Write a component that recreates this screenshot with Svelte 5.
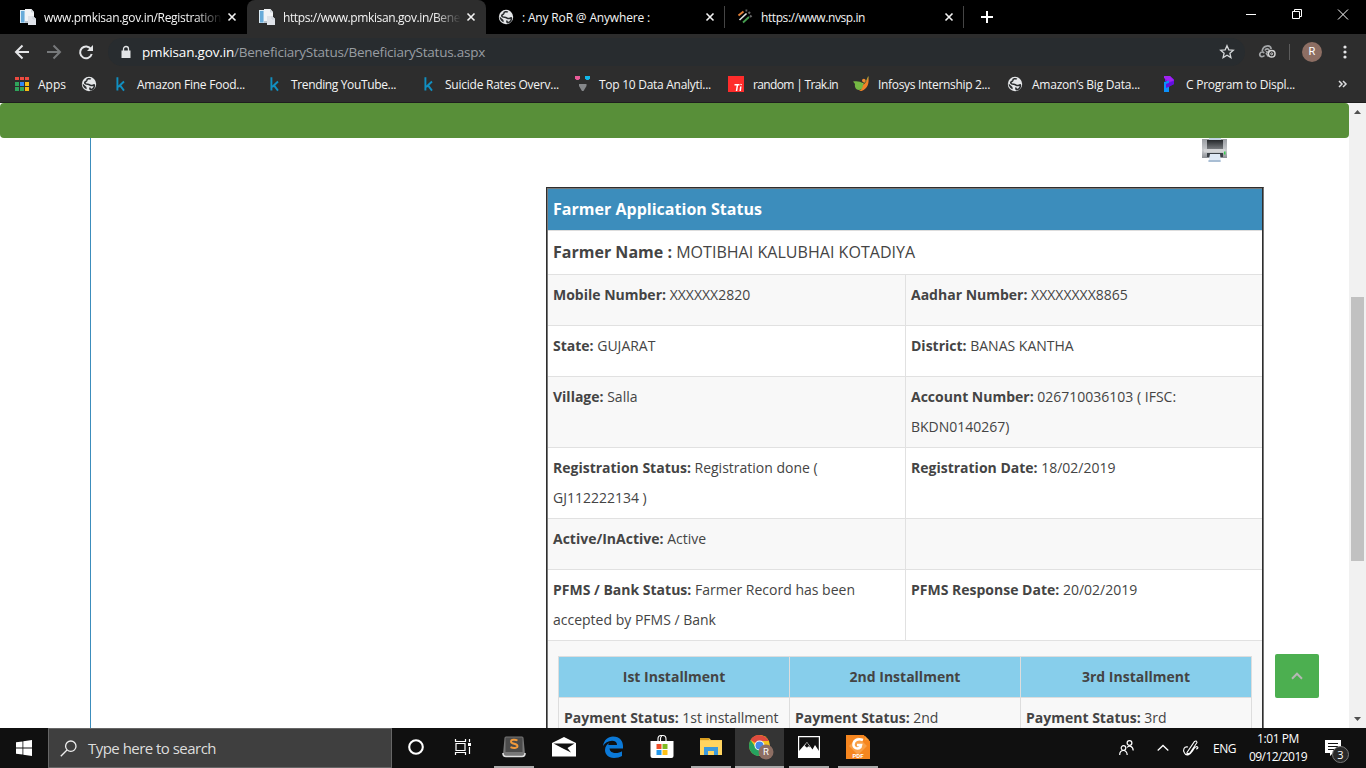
<script>
  // Spreads a label's letters so that it takes up the given width.
  function fit(node, width) {
    const natural = node.getBoundingClientRect().width;
    const count = node.textContent.length;
    node.style.letterSpacing = `${(width - natural) / count}px`;
  }

  const bookmarks = [
    { icon: 'kaggle', x: 112, text: 'Amazon Fine Food...', w: 108 },
    { icon: 'kaggle', x: 266, text: 'Trending YouTube...', w: 105 },
    { icon: 'kaggle', x: 420, text: 'Suicide Rates Overv...', w: 114 },
    { icon: 'vidhya', x: 574, text: 'Top 10 Data Analyti...', w: 112 },
    { icon: 'trak', x: 728, text: 'random | Trak.in', w: 85 },
    { icon: 'bird', x: 853, text: 'Infosys Internship 2...', w: 112 },
    { icon: 'globe', x: 1007, text: 'Amazon’s Big Data...', w: 108 },
    { icon: 'program', x: 1161, text: 'C Program to Displ...', w: 109 }
  ];

  const tabs = [
    { icon: 'page', text: 'www.pmkisan.gov.in/Registration', w: 177, active: false },
    { icon: 'page', text: 'https://www.pmkisan.gov.in/Bene', w: 177, active: true },
    { icon: 'globe', text: ': Any RoR @ Anywhere :', w: 128, active: false },
    { icon: 'nvsp', text: 'https://www.nvsp.in', w: 104, active: false }
  ];

  const rows = [
    { h: 51, a: ['Mobile Number:', 'XXXXXX2820'], b: ['Aadhar Number:', 'XXXXXXXX8865'] },
    { h: 51, a: ['State:', 'GUJARAT'], b: ['District:', 'BANAS KANTHA'] },
    { h: 71, a: ['Village:', 'Salla'], b: ['Account Number:', '026710036103 ( IFSC:', 'BKDN0140267)'] },
    { h: 71, a: ['Registration Status:', 'Registration done (', 'GJ112222134 )'], b: ['Registration Date:', '18/02/2019'] },
    { h: 51, a: ['Active/InActive:', 'Active'], b: ['', ''] },
    { h: 71, a: ['PFMS / Bank Status:', 'Farmer Record has been', 'accepted by PFMS / Bank'], b: ['PFMS Response Date:', '20/02/2019'] }
  ];

  const installments = [
    ['Ist Installment', '1st installment'],
    ['2nd Installment', '2nd'],
    ['3rd Installment', '3rd']
  ];
</script>

{#snippet icon(name)}
  <svg class="ico" width="16" height="16" viewBox="0 0 16 16">
    {#if name === 'page'}
      <path d="M0 1h6v13H0z" fill="#dcebf5" />
      <path d="M1 2h3.500v11.500H1z" fill="#68abd9" />
      <path d="M5 0h6.500L14 3v5l2 2v6H8v-2H5z" fill="#f1f3f6" />
      <path d="M8 7h5l3 3v6H8z" fill="#dfe3e9" />
      <path d="M5 12h3v2H5z" fill="#b9c4cf" />
      <path d="M11.500.5V3H14M13 7v3h3" stroke="#c2c9d2" stroke-width=".8" fill="none" />
    {:else if name === 'globe'}
      <circle cx="8" cy="8" r="7.200" fill="#e4e6e8" />
      <path d="M9.800 3.200C8.500 2.200 6 2.800 5.800 4.400c-.2 1.300-1.800 1-2 2.100-.2 1.300 1.500 1.800 3 1.700 1.700 0 1.800 1.200 3 1.300 1.600.1 3.200-.2 3.200-1.200 1.200 2.500-.8 4.700-2.500 5.200-1.500.4-2-.9-1.100-1.900" fill="none" stroke="#292c2e" stroke-width="1.600" />
      <path d="M1.600 7.500 5.500 11l.2 2.300C3.400 12.500 1.600 10.500 1.600 7.500z" fill="#292c2e" />
    {:else if name === 'nvsp'}
      <path d="m1.500 6.500 5-4" stroke="#df7d36" stroke-width="2" />
      <path d="m2.500 11 7-6.500" stroke="#dfe2df" stroke-width="1.700" />
      <path d="m6 13.500 6-5.500" stroke="#469f50" stroke-width="1.800" />
      <path d="M8.500 1.500h1.800M11.500 4.500 13 3M13 8l1.500-1.500" stroke="#666" stroke-width="2.200" />
    {:else if name === 'kaggle'}
      <path d="M5.400 1.200v13.300M12 5.500 6.200 11M8 9.400l4 5.200" fill="none" stroke="#118fc1" stroke-width="1.900" />
    {:else if name === 'vidhya'}
      <path d="M1 0h5v2.500L4.500 4h-2L1 2.500z" fill="#e95b98" />
      <path d="M11 0h5v2.500L14.500 4h-2L11 2.500z" fill="#12b7e9" />
      <path d="M5 8h7.500v2L9.500 15h-1.500L5 10z" fill="#85878a" />
    {:else if name === 'trak'}
      <path d="M0 0h16v16H0z" fill="#fe2c2b" />
      <path d="M6.500 8.700h5M9.500 8.500l-1 6.500M12.800 10.500l-.6 4.500M13.200 8l-.2 1" stroke="#fff" stroke-width="1.500" />
    {:else if name === 'bird'}
      <path d="M0 5.500c4-.8 7-.2 10.500 2 .8 3-1 6.500-4.500 6.500-4 0-4.500-4.500-4-6z" fill="#74b843" />
      <path d="M15.300.5c1 6.500-.2 12-6.800 14.500H5.800c3-1.200 4-3.500 4.200-6C12.500 7.500 14 4.500 15.300.5z" fill="#f08228" />
      <circle cx="10.800" cy="4.500" r="1.800" fill="#ef8c32" />
      <path d="M9 7.500c3-.3 5-3 6.300-7" fill="none" stroke="#bfcf3e" stroke-width=".6" />
    {:else if name === 'program'}
      <path d="M4 0h5l4 3.500V8L8 10.500V6.500L4 5z" fill="#7a13f0" />
      <path d="M3 0h6l4 4.500L8 6 3 2z" fill="#a022f2" />
      <path d="M3 6 8 4.500V16H3z" fill="#0b91fb" />
      <path d="m5 8 8-3v3l-5 2.800L5 12z" fill="#6210df" />
    {/if}
  </svg>
{/snippet}

<div class="screen">
  <header class="tabs">
    {#each tabs as tab}
      <div class="tab" class:active={tab.active}>
        {@render icon(tab.icon)}
        <span class="title" class:fade={tab.icon === 'page'}><span class="fit" use:fit={tab.w}>{tab.text}</span></span>
        <svg class="close" width="8" height="8" viewBox="0 0 8 8"><path d="m.5.5 7 7m0-7-7 7" stroke="#f2f2f2" stroke-width="1.600" /></svg>
      </div>
    {/each}
    <svg class="plus" width="12" height="12" viewBox="0 0 12 12"><path d="M6 0v12M0 6h12" stroke="#fff" stroke-width="2" /></svg>
    <svg class="win" width="104" height="12" viewBox="0 0 104 12" fill="none" stroke="#fff">
      <path d="M0 6.500h10M46.500 3.500h7v7h-7zM48.500 3V1.500h7v7H54M92 1.500l10 10m0-10-10 10" />
    </svg>
  </header>

  <div class="toolbar">
    <svg class="nav" width="80" height="16" viewBox="0 0 80 16" fill="none" stroke-width="2">
      <path d="M14 8H1.500M7.500 1.500 1 8l6.500 6.500" stroke="#e4e5e7" />
      <path d="M32 8h12.500M38.500 1.500 45 8l-6.500 6.500" stroke="#77797b" />
      <path d="M76 5.200A5.900 5.900 0 1 0 76.700 10" stroke="#e4e5e7" />
      <path d="M78 1v6h-6z" fill="#e4e5e7" stroke="none" />
    </svg>
    <div class="address">
      <svg width="10" height="13" viewBox="0 0 10 13"><path d="M.5 4.500h9V12h-9z" fill="#e3e5e7" /><path d="M2.500 5V3a2.300 2.300 0 0 1 5 0v2" fill="none" stroke="#e3e5e7" stroke-width="1.300" /></svg>
      <span class="url"><span class="fit" use:fit={92}>pmkisan.gov.in</span><span class="fit path" use:fit={251}>/BeneficiaryStatus/BeneficiaryStatus.aspx</span></span>
      <svg class="star" width="16" height="16" viewBox="0 0 16 16"><path d="m8 1.700 1.800 4.100 4.500.4-3.400 3 1 4.400L8 11.200l-3.900 2.400 1-4.400-3.400-3 4.500-.4z" fill="none" stroke="#d4d7d9" stroke-width="1.300" /></svg>
    </div>
    <svg class="ext" width="17" height="14" viewBox="0 0 17 14" fill="none" stroke="#a4a6a8" stroke-width="1.700">
      <path d="M5.500 10.500C3 13 0 11 1 8.500c.8-2 3.500-2 4-.2M3.200 6C4 0 11.500-.5 12.200 4M6 5.500c1-2.500 4-2 4.200.2 0 1.800-2.700 2-2.700.3M7 8l2.500 3.500" />
      <circle cx="12.700" cy="8.800" r="3.300" stroke="#d4d4d4" stroke-width="1.500" /><circle cx="12.700" cy="8.800" r="1" stroke="#d4d4d4" stroke-width="1" />
    </svg>
    <i class="divider"></i>
    <span class="avatar">R</span>
    <svg class="dots" width="4" height="14" viewBox="0 0 4 14" fill="#e4e5e7"><circle cx="2" cy="2" r="1.600" /><circle cx="2" cy="7" r="1.600" /><circle cx="2" cy="12" r="1.600" /></svg>
  </div>

  <nav class="bookmarks">
    <svg class="apps" width="14" height="14" viewBox="0 0 14 14">
      <path d="M0 0h4v3H0zM5 0h4v3H5zM10 0h4v3h-4z" fill="#ed4a40" />
      <path d="M0 5h4v4H0zM0 10h4v4H0zM5 10h4v4H5z" fill="#2fa55b" />
      <path d="M5 5h4v4H5z" fill="#3287f4" /><path d="M10 5h4v4h-4zM10 10h4v4h-4z" fill="#f7bc16" />
    </svg>
    <span class="fit" use:fit={28}>Apps</span>
    <span class="lone">{@render icon('globe')}</span>
    <div class="marks">
      {#each bookmarks as mark, i}
        <div class="mark" style:width="{(bookmarks[i + 1]?.x ?? 1315) - mark.x}px">
          {@render icon(mark.icon)}
          <span class="fit" use:fit={mark.w}>{mark.text}</span>
        </div>
      {/each}
    </div>
    <svg class="more" width="9" height="8" viewBox="0 0 9 8"><path d="m1 1 3 3-3 3m4-6 3 3-3 3" fill="none" stroke="#dcdddf" stroke-width="1.500" /></svg>
  </nav>

  <main>
    <div class="page">
      <div class="band"></div>
      <div class="body">
        <section>
          <svg class="printer" width="26" height="26" viewBox="0 0 26 26">
            <defs>
              <linearGradient id="tray" x2="0" y2="1"><stop offset="0" stop-color="#25282b" /><stop offset="1" stop-color="#777a7e" /></linearGradient>
              <linearGradient id="case" x2="0" y2="1"><stop offset="0" stop-color="#9a9da2" /><stop offset=".6" stop-color="#c9cbce" /><stop offset="1" stop-color="#8b8e93" /></linearGradient>
            </defs>
            <path d="M0 1h25v19H0z" fill="url(#case)" />
            <path d="M7 0h12v2H7z" fill="#c3d3e4" />
            <path d="M5 2h16v9H5z" fill="url(#tray)" />
            <path d="M2 11h21v3.500H2z" fill="#d3d4d6" />
            <path d="M5 15h16v4H5z" fill="#3b4046" />
            <path d="M8 16h10l1 8H6.500z" fill="#dfe9f5" /><path d="M6.500 22h12v2h-12z" fill="#a9bed4" /><path d="M22 13.500h1.500v3H22z" fill="#38cf50" />
          </svg>
          <div class="table">
            <div class="heading"><span class="fit" use:fit={209}>Farmer Application Status</span></div>
            <div class="name"><b class="fit" use:fit={119}>Farmer Name :</b>&nbsp;<span class="fit" use:fit={239}>MOTIBHAI KALUBHAI KOTADIYA</span></div>
            {#each rows as row}
              <div class="row" style:height="{row.h}px">
                {#each [row.a, row.b] as cell}
                  <div class="cell">
                    <p><b>{cell[0]}</b> <span>{cell[1]}</span></p>
                    {#if cell[2]}<p>{cell[2]}</p>{/if}
                  </div>
                {/each}
              </div>
            {/each}
            <div class="payments">
              <div class="grid">
                {#each installments as item}
                  <div class="head">{item[0]}</div>
                {/each}
                {#each installments as item}
                  <div class="pay"><b>Payment Status:</b> {item[1]}</div>
                {/each}
              </div>
            </div>
          </div>
        </section>
      </div>
      <div class="totop"><svg width="12" height="8" viewBox="0 0 12 8"><path d="m1 6.700 5-5 5 5" fill="none" stroke="#b5b7b5" stroke-width="2" /></svg></div>
    </div>
    <aside>
      <svg width="7" height="4" viewBox="0 0 7 4"><path d="M0 4 3.500 0 7 4z" fill="#505050" /></svg>
      <div class="thumb"></div>
      <svg width="7" height="4" viewBox="0 0 7 4"><path d="M0 0h7L3.500 4z" fill="#505050" /></svg>
    </aside>
  </main>

  <footer>
    <div class="start"><svg width="16" height="16" viewBox="0 0 16 16" fill="#fff"><path d="M0 2.300 6.500 1.400v6.100H0zM7.300 1.300 16 0v7.500H7.300zM0 8.400h6.500v6.200L0 13.700zM7.300 8.400H16V16l-8.700-1.300z" /></svg></div>
    <div class="search">
      <svg width="17" height="17" viewBox="0 0 17 17" fill="none" stroke="#eee" stroke-width="1.300"><circle cx="10.800" cy="6.200" r="5.200" /><path d="M7 10 .8 16.200" /></svg>
      <span class="fit" use:fit={128}>Type here to search</span>
    </div>
    <div class="task"><svg width="18" height="18" viewBox="0 0 18 18"><circle cx="9" cy="9" r="6.800" fill="none" stroke="#fff" stroke-width="2.100" /></svg></div>
    <div class="task view"><svg width="18" height="16" viewBox="0 0 18 16" fill="none" stroke="#fff"><path d="M2 4.500h9v7H2zM1.500 0v2.500h10V0M1.500 16v-2.500h10V16M15.500 0v3m0 5v7" stroke-width="1.200" /><path d="M14 4h3v3h-3z" fill="#fff" stroke="none" /></svg></div>
    <div class="task run">
      <svg width="24" height="22" viewBox="0 0 24 22">
        <path d="M2.500 2q0-1.500 1.500-1.500h16q1.500 0 1.500 1.500L23 18q0 3-3 3H4q-3 0-3-3z" fill="#777" />
        <path d="M1 17q0 3.500 3 3.500h16q3 0 3-3.500" fill="none" stroke="#e0e0e0" stroke-width="1.600" />
        <path d="M3.500 1.500h17v14.500h-17z" fill="#4b4b4b" />
        <path d="M15.500 4.500c-2-1-6.500-1.300-6.500 1.200 0 2.600 6.500 1.500 6.500 4.300 0 2.500-4.500 2.300-7 1.200" fill="none" stroke="#f39a3a" stroke-width="1.900" />
      </svg>
    </div>
    <div class="task"><svg width="24" height="20" viewBox="0 0 24 20"><path d="M0 6 12 0l12 6v13.500H0z" fill="#fff" /><path d="M1.500 6.500h21L15.500 11l3.500 4.500L10 11z" fill="#111" /></svg></div>
    <div class="task"><svg width="22" height="22" viewBox="0 0 22 22"><path d="M1 10C2 4 6 .5 11 .5c7 0 10 5 10 9.500v2.500H7.500c.3 3 3 4.500 6 4.500 2.500 0 5-.8 6.500-1.800V20c-2 1.300-5 2-8 2-6 0-9-4-9-8 0-3.500 2-6 5-7.500C7 7 6.500 7.500 6.300 9H15c0-3-2-4.200-5-4.200C6 4.800 3 7 1 10z" fill="#0b79d8" /></svg></div>
    <div class="task"><svg width="24" height="24" viewBox="0 0 24 24"><path d="M.5 6h23v15q0 2-2 2h-19q-2 0-2-2z" fill="#fff" /><path d="M8 7V4q0-3.500 3-3.500h2q3 0 3 3.500v3M10.500 6V3q0-1.500 1.500-1.500" fill="none" stroke="#fff" stroke-width="1.100" /><path d="M6.500 9h5v5h-5z" fill="#ef4e28" /><path d="M12.500 9h5v5h-5z" fill="#7eba23" /><path d="M6.500 15h5v5h-5z" fill="#2399ed" /><path d="M12.500 15h5v5h-5z" fill="#ffc116" /></svg></div>
    <div class="task run"><svg width="22" height="20" viewBox="0 0 22 20"><path d="M0 1h9l2 2h11v15H0z" fill="#f8ca55" /><path d="M0 1h9v2H0z" fill="#d99e20" /><path d="M0 4h22v14H0z" fill="#ffd45f" /><path d="M4 10h14v8h-4v-4H8v4H4z" fill="#3b99db" /></svg></div>
    <div class="task run chrome">
      <svg width="24" height="24" viewBox="0 0 24 24"><circle cx="10.500" cy="10.500" r="10.500" fill="#f5c21d" /><path d="M10.500 10.500 1.500 5a10.500 10.500 0 0 1 18.300 1h-9.300z" fill="#df4b3f" /><path d="M1.500 5A10.500 10.500 0 0 0 10 21l4.500-8-8-1z" fill="#25a35f" /><circle cx="10.500" cy="10.500" r="5" fill="#fff" /><circle cx="10.500" cy="10.500" r="4" fill="#4787e8" /><circle cx="17" cy="17" r="7.500" fill="#8d6e63" /><text x="17" y="20.300" text-anchor="middle" font-size="9.500" font-family="Roboto" fill="#fff">R</text></svg>
    </div>
    <div class="task run"><svg width="22" height="22" viewBox="0 0 22 22"><path d="M.6.600h20.800v20.800H.6z" fill="#111" stroke="#fff" stroke-width="1.200" /><path d="m1 15 8-9 5.500 7.500L17 9l4 6v6H1z" fill="#fff" /><path d="m6.500 10 2.500-3.500 3.200 5-2-1.300-1.200 1.600-1.300-1.300z" fill="#111" /></svg></div>
    <div class="task run"><svg width="24" height="24" viewBox="0 0 24 24"><path d="M0 0h18l6 6v18H0z" fill="#f6861f" /><path d="M18 0h6v6z" fill="#111" /><path d="m19 1 4 4h-4z" fill="#ff9b30" /><path d="m12 2 9 9-9 9-9-9z" fill="#f9a149" /><path d="M17 5c-5-2-9 0-9.500 4s4 6 7 3l.5-2h-4" fill="none" stroke="#fff" stroke-width="2.500" /><text x="12" y="22.500" text-anchor="middle" font-size="6" font-weight="700" font-family="Roboto" fill="#fff">PDF</text></svg></div>

    <div class="tray">
      <svg class="people" width="15" height="16" viewBox="0 0 15 16" fill="none" stroke="#fff" stroke-width="1.200"><circle cx="4.500" cy="8" r="2.300" /><path d="M.7 15c0-6 7.500-6 7.500 0" /><circle cx="10.500" cy="3" r="2.400" /><path d="M8 7.500c2-2.500 6-1.500 6.200 3" /></svg>
      <svg class="chev" width="12" height="8" viewBox="0 0 12 8"><path d="m.7 6.500 5.300-5 5.300 5" fill="none" stroke="#fff" stroke-width="1.300" /></svg>
      <svg class="pen" width="17" height="16" viewBox="0 0 17 16" fill="none" stroke="#fff" stroke-width="1.100"><path d="M4 12.500 11.500 1.500q2-1.500 2.500 1L7 13l-3 1zM5 7C1 6-.5 10 1.500 13c2 4 6 1 8-2 2-4 4-5 5-4s0 2-1.500 2" /></svg>
      <span class="eng"><span class="fit" use:fit={23}>ENG</span></span>
      <div class="clock"><span class="fit" use:fit={42}>1:01 PM</span><span class="fit" use:fit={58}>09/12/2019</span></div>
      <div class="notice">
        <svg width="16" height="16" viewBox="0 0 16 16"><path d="M0 0h16v13H8l-3 3v-3H0z" fill="#fff" /><path d="M3 3.500h10M3 6.500h10M3 9.500h7" stroke="#111" /></svg>
        <span>3</span>
      </div>
    </div>
  </footer>
</div>

<style>
  :global(body) { margin: 0; overflow: hidden; }
  * { box-sizing: border-box; }
  svg { display: block; flex: none; overflow: visible; }
  .screen { width: 1366px; height: 768px; display: flex; flex-direction: column; overflow: hidden; font-family: "Open Sans", sans-serif; font-size: 12px; background: #fff; }
  .fit { display: inline-block; white-space: pre; }

  .tabs { height: 34px; flex: none; display: flex; background: #000; color: #f4f4f4; padding-left: 8px; }
  .tab { width: 239px; height: 34px; padding: 0 11px 0 12px; display: flex; align-items: center; }
  .tab.active { background: #2d2d2d; border-radius: 8px 8px 0 0; }
  .title { width: 178px; margin-left: 8px; overflow: hidden; }
  .title.fade { mask-image: linear-gradient(90deg, #000 85%, transparent); }
  .close { margin-left: auto; }
  .tab:nth-child(n + 3) { padding-right: 10px; border-right: 1px solid transparent; border-image: linear-gradient(transparent 7px, #454545 7px 27px, transparent 27px) 1; }
  .plus { margin: 11px 0 0 17px; }
  .win { margin: 8px 16px 0 auto; }

  .toolbar { height: 35px; flex: none; background: #2d2d2d; display: flex; align-items: center; padding: 1px 19px 0 15px; }
  .address { width: 1137px; height: 28px; margin-left: 13px; border-radius: 14px; background: #282c2f; display: flex; align-items: center; padding: 0 10px 0 13px; color: #fff; font-size: 13.500px; }
  .url { margin-left: 11px; white-space: nowrap; line-height: 20px; }
  .path { color: #989da2; }
  .star { margin-left: auto; }
  .ext { margin-left: 14px; }
  .divider { width: 1px; height: 16px; margin-left: 13px; background: #5b5b5b; }
  .avatar { width: 20px; height: 20px; margin-left: 12px; border-radius: 50%; background: #8d6e63; color: #fff; font: 11px/20px Roboto, sans-serif; text-align: center; }
  .dots { margin-left: auto; }

  .bookmarks { height: 34px; flex: none; background: #2d2d2d; border-bottom: 1px solid #1e1e1e; color: #f4f4f4; display: flex; align-items: center; padding: 0 19px 3px 15px; }
  .apps { margin-right: 9px; }
  .lone { margin-left: 15px; }
  .marks { display: flex; margin-left: 15px; }
  .mark { display: flex; align-items: center; gap: 9px; flex: none; }
  .more { margin-left: auto; }

  main { height: 625px; flex: none; display: flex; overflow: hidden; }
  .page { width: 1349px; height: 625px; position: relative; overflow: hidden; }
  .band { height: 35px; border-radius: 4px; background: #588f39; }
  .body { margin-left: 90px; border-left: 1px solid #3c8dbc; height: 590px; }
  section { margin-left: 455px; width: 718px; }
  .printer { margin-left: 656px; }
  .table { margin-top: 23px; border: 1px solid #2e2e2e; border-right-color: #777; border-bottom: 0; height: 600px; color: #444; font-size: 14px; line-height: 30px; box-shadow: inset 1px 0 #777, inset -1px 0 #2e2e2e; padding: 0 1px; }
  .heading { height: 42px; border-top: 1px solid #777; background: #3c8dbc; color: #fff; font-size: 16px; font-weight: 700; line-height: 40px; padding-left: 5px; }
  .name { height: 44px; border-top: 1px solid #ddd; line-height: 42px; font-size: 16px; padding-left: 5px; white-space: nowrap; }
  .row { display: grid; grid-template-columns: 357px 1fr; border-top: 1px solid #e1e1e1; }
  .cell { padding: 5px; white-space: nowrap; }
  .cell p { margin: 0; }
  .cell + .cell { border-left: 1px solid #e1e1e1; }
  .row:nth-child(odd) { background: #f8f8f8; }
  .payments { border-top: 1px solid #e1e1e1; background: #f8f8f8; height: 150px; padding: 15px 10px 0; }
  .grid { display: grid; grid-template-columns: repeat(3, 231px); border-left: 1px solid #ddd; border-top: 1px solid #ddd; width: 694px; }
  .head { height: 41px; background: #87ceeb; text-align: center; font-weight: 700; line-height: 40px; border-right: 1px solid #ddd; border-bottom: 1px solid #ddd; }
  .pay { height: 100px; padding: 5px; border-right: 1px solid #ddd; }
  .totop { position: absolute; left: 1275px; top: 551px; width: 44px; height: 44px; border-radius: 2px; background: #4caf50; display: flex; align-items: center; justify-content: center; }
  aside { width: 17px; height: 625px; background: #f1f1f1; display: flex; flex-direction: column; align-items: center; padding: 7px 0 7px; }
  .thumb { width: 13px; height: 264px; margin: 183px 0 auto; background: #c1c1c1; }

  footer { height: 40px; flex: none; background: #101010; display: flex; color: #fff; }
  .start { width: 48px; display: grid; place-items: center; }
  .search { width: 344px; background: #3f3f3f; border: 1px solid #666; display: flex; align-items: center; padding-left: 11px; gap: 11px; color: #ddd; font-size: 15px; }
  .task { width: 49px; display: grid; place-items: center; border-bottom: 2px solid transparent; }
  .search + .task { width: 47px; }
  .task.view { width: 50px; padding-right: 2px; }
  .view + .task { width: 50px; }
  .task.run { background: linear-gradient(#aaa, #aaa) center bottom / 40px 2px no-repeat; background-origin: border-box; background-clip: border-box; }
  .task.chrome { background-color: #343434; background-size: 49px 2px; padding-left: 3px; }
  .tray { margin-left: auto; display: flex; align-items: center; }
  .people { margin-right: 1px; }
  .chev { margin-left: 22px; }
  .pen { margin-left: 14px; }
  .eng { margin-left: 13px; }
  .clock { width: 60px; margin-left: 12px; display: flex; flex-direction: column; align-items: center; line-height: 18px; }
  .notice { margin-left: 17px; width: 41px; height: 40px; position: relative; padding-top: 12px; border-right: 1px solid transparent; }
  .notice span { position: absolute; left: 7px; top: 18px; width: 17px; height: 17px; border: 1px solid #777; border-radius: 50%; background: #292929; font-size: 11px; line-height: 15px; text-align: center; }
</style>
